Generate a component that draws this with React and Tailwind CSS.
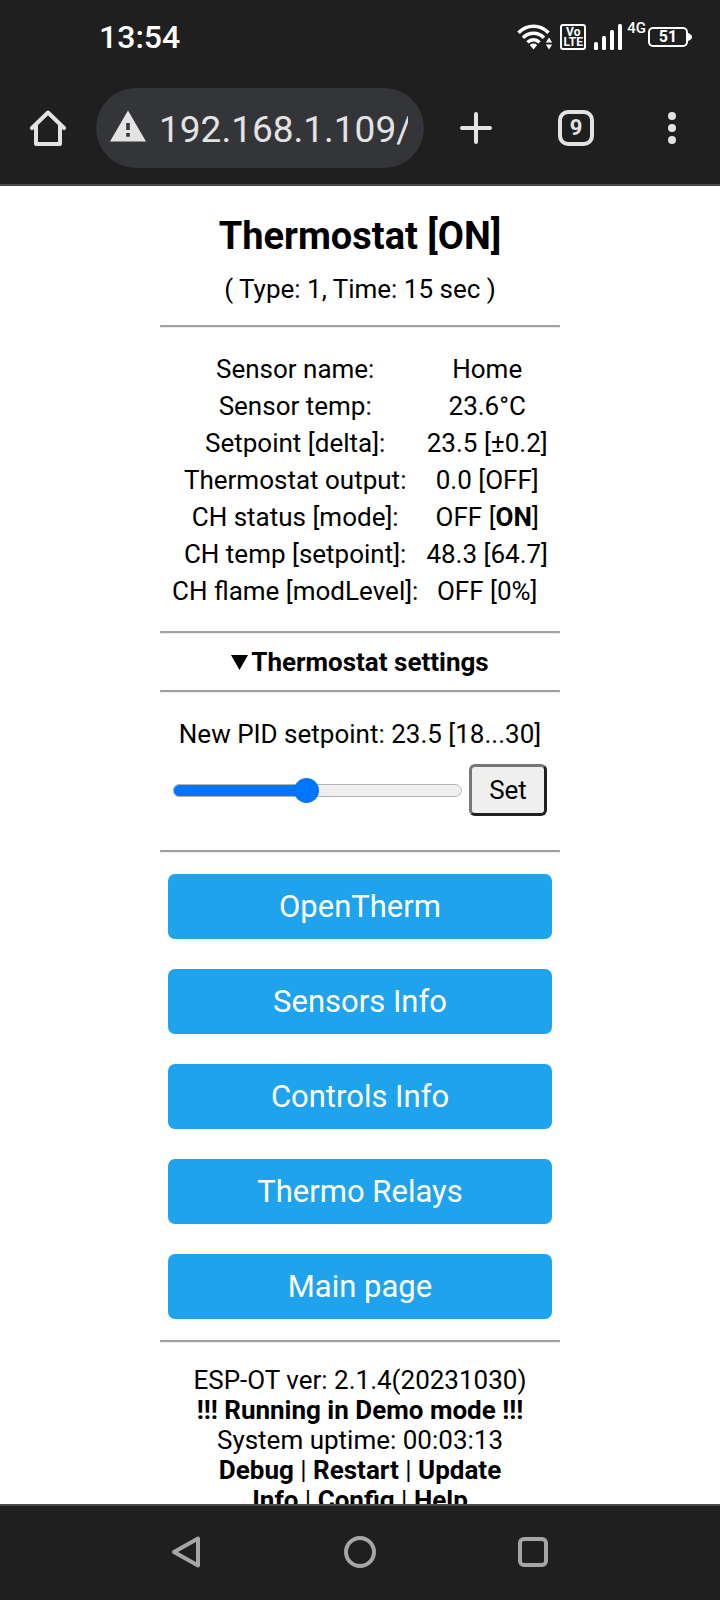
import { useState } from "react";

const readings = [
  ["Sensor name:", "Home"],
  ["Sensor temp:", "23.6°C"],
  ["Setpoint [delta]:", "23.5 [±0.2]"],
  ["Thermostat output:", "0.0 [OFF]"],
  ["CH status [mode]:", <>OFF [<b>ON</b>]</>],
  ["CH temp [setpoint]:", "48.3 [64.7]"],
  ["CH flame [modLevel]:", "OFF [0%]"],
];

const pages = ["OpenTherm", "Sensors Info", "Controls Info", "Thermo Relays", "Main page"];

function Rule() {
  return <hr className="h-[3px] w-full border-x border-t-2 border-b border-x-[#bbbbbb] border-t-[#a0a0a0] border-b-[#ececec]" />;
}

function StatusBar() {
  return (
    <div className="flex h-[73px] items-center justify-between pr-7 pl-[99px] text-white">
      <time className="text-[32px] leading-10 font-medium">13:54</time>
      <div className="flex items-center">
        <svg className="h-[26px] w-[36px]" viewBox="0 0 36 26" fill="none" aria-label="Wi-Fi">
          <g stroke="#fff" strokeWidth="3.5">
            <path d="M1.500 8.800C10 .2 23 .2 31.500 8.800" />
            <path d="M6 13.800C12 7.800 21 7.800 27 13.800" />
            <path d="M10.500 18.400C14 14.800 19 14.800 22.500 18.400" />
          </g>
          <path d="M12.800 21Q16.500 18.200 20.200 21L16.500 25.500Z" fill="#fff" />
          <path d="M32 13.500l3.200 5h-6.400zM32 25.500l3.200-5h-6.400z" fill="#fff" />
        </svg>
        <div className="ml-[7px] flex h-[26px] w-[26px] flex-col items-center justify-center rounded-[3px] border-2 border-white text-xs leading-[10px] font-bold">
          <span>Vo</span>
          <span>LTE</span>
        </div>
        <svg className="ml-2 h-[26px] w-[28px]" viewBox="0 0 28 26" aria-label="Signal">
          <g fill="#fff">
            <rect x="0" y="18" width="4" height="8" rx="1.500" />
            <rect x="8" y="12" width="4" height="14" rx="1.500" />
            <rect x="16" y="6" width="4" height="20" rx="1.500" />
            <rect x="24" y="0" width="4" height="26" rx="1.500" />
          </g>
        </svg>
        <span className="ml-[5px] self-start pr-[2px] text-[15px] leading-2 font-medium">4G</span>
        <div className="flex h-5 w-10 items-center justify-center rounded-[5px] border-2 border-white text-base leading-4 font-bold">51</div>
        <svg className="h-2 w-1" viewBox="0 0 4 8" aria-hidden="true">
          <path d="M0 0Q4 1.500 4 4T0 8Z" fill="#fff" />
        </svg>
      </div>
    </div>
  );
}

function Toolbar() {
  return (
    <div className="flex h-[111px] items-center px-[30px] pb-px text-[#e3e3e3]">
      <button type="button" aria-label="Home" className="shrink-0">
        <svg className="size-9" viewBox="0 0 36 36" fill="none" stroke="currentColor" strokeWidth="4" strokeLinecap="round" strokeLinejoin="round">
          <path d="M2 18L18 2.500L34 18" />
          <path d="M6 15V34H30V15" />
        </svg>
      </button>
      <label className="ml-[30px] flex h-20 min-w-0 flex-1 items-center gap-[13px] rounded-full bg-[#343539] pr-4 pl-[14px]">
        <svg className="mb-1 h-8 w-9 shrink-0" viewBox="0 0 36 32" aria-label="Not secure">
          <path fillRule="evenodd" fill="#e3e3e3" d="M18 0.500L36 31.500H0ZM16.200 13V20H19.800V13ZM16.200 23V26.800H19.800V23Z" />
        </svg>
        <input aria-label="Address" defaultValue="192.168.1.109/" className="min-w-0 flex-1 bg-transparent pt-1 text-[37px] leading-10 outline-none" />
      </label>
      <button type="button" aria-label="New tab" className="ml-9 shrink-0">
        <svg className="size-8" viewBox="0 0 32 32" stroke="currentColor" strokeWidth="4" strokeLinecap="round">
          <path d="M2 16H30M16 2V30" />
        </svg>
      </button>
      <button type="button" aria-label="Tabs" className="ml-[66px] flex size-9 shrink-0 items-center justify-center rounded-[10px] border-4 border-[#e3e3e3] text-[22px] leading-6 font-bold">9</button>
      <button type="button" aria-label="Menu" className="ml-[60px] shrink-0">
        <svg className="h-8 w-9" viewBox="0 0 36 32" fill="currentColor">
          <circle cx="18" cy="4" r="4" />
          <circle cx="18" cy="16" r="4" />
          <circle cx="18" cy="28" r="4" />
        </svg>
      </button>
    </div>
  );
}

function SetpointForm() {
  const [value, setValue] = useState(23.5);
  const percent = ((value - 18) / 12) * 100;
  return (
    <form onSubmit={(e) => e.preventDefault()} className="mt-[26px] mb-[34px] px-[13px]">
      <label htmlFor="setpoint" className="block">New PID setpoint: {value.toFixed(1)} [18...30]</label>
      <div className="mt-[15px] flex items-center gap-[7px]">
        <input
          id="setpoint"
          type="range"
          min="18"
          max="30"
          step="0.1"
          value={value}
          onChange={(e) => setValue(Number(e.target.value))}
          style={{ backgroundImage: `linear-gradient(to right, #0075ff ${percent}%, transparent ${percent}%)` }}
          className="h-[13px] min-w-0 flex-1 appearance-none rounded-full bg-[#efefef] ring-1 ring-[#b2b2b2] ring-inset [&::-webkit-slider-thumb]:size-[25px] [&::-webkit-slider-thumb]:appearance-none [&::-webkit-slider-thumb]:rounded-full [&::-webkit-slider-thumb]:bg-[#0075ff]"
        />
        <button type="submit" className="h-[52px] w-[78px] rounded-md border-3 border-t-[#767676] border-r-[#212121] border-b-[#212121] border-l-[#767676] bg-[#efefef]">Set</button>
      </div>
    </form>
  );
}

export default function App() {
  return (
    <div className="flex h-screen flex-col bg-white font-[Roboto,sans-serif] text-black">
      <header className="shrink-0 border-b-2 border-[#4a4a4a] bg-[#1f1f1f]">
        <StatusBar />
        <Toolbar />
      </header>

      <main className="min-h-0 flex-1 overflow-hidden">
        <div className="mx-auto w-full max-w-[400px] text-center text-[26px] leading-[30px]">
          <h1 className="pt-7 text-[38px] leading-[44px] font-bold">Thermostat [ON]</h1>
          <p className="mt-4 mb-[21px]">( Type: 1, Time: 15 sec )</p>
          <Rule />
          <table className="mx-auto my-[22px]">
            <tbody>
              {readings.map(([name, value]) => (
                <tr key={name} className="h-[37px]">
                  <th scope="row" className="pr-2 font-normal">{name}</th>
                  <td>{value}</td>
                </tr>
              ))}
            </tbody>
          </table>
          <Rule />
          <details open>
            <summary className="flex items-center justify-center gap-[3px] py-[13px] font-bold">
              <svg className="h-[15px] w-[17px]" viewBox="0 0 17 15" aria-hidden="true">
                <path d="M0 0H17L8.500 15Z" />
              </svg>
              Thermostat settings
            </summary>
            <Rule />
            <SetpointForm />
          </details>
          <Rule />
          <nav className="my-[21px] flex flex-col gap-[30px] px-2">
            {pages.map((page) => (
              <a key={page} href="#" className="flex h-[65px] items-center justify-center rounded-[7px] bg-[#1fa3ec] text-[31px] text-white">{page}</a>
            ))}
          </nav>
          <Rule />
          <footer className="pt-[22px]">
            <p>ESP-OT ver: 2.1.4(20231030)</p>
            <p className="font-bold">!!! Running in Demo mode !!!</p>
            <p>System uptime: 00:03:13</p>
            <p><a href="#" className="font-bold">Debug</a> | <a href="#" className="font-bold">Restart</a> | <a href="#" className="font-bold">Update</a></p>
            <p><a href="#" className="font-bold">Info</a> | <a href="#" className="font-bold">Config</a> | <a href="#" className="font-bold">Help</a></p>
          </footer>
        </div>
      </main>

      <nav aria-label="System" className="grid h-24 shrink-0 grid-cols-3 place-items-center border-t-2 border-[#4a4a4a] bg-[#1f1f1f] px-[100px] pb-[2px] text-[#a6a6a6]">
        <button type="button" aria-label="Back">
          <svg className="size-8" viewBox="0 0 32 32" fill="none" stroke="currentColor" strokeWidth="4" strokeLinejoin="round">
            <path d="M3 16L27 2.500V29.500Z" />
          </svg>
        </button>
        <button type="button" aria-label="Home screen">
          <svg className="size-8" viewBox="0 0 32 32" fill="none" stroke="currentColor" strokeWidth="4">
            <circle cx="16" cy="16" r="14" />
          </svg>
        </button>
        <button type="button" aria-label="Recent apps">
          <svg className="size-8" viewBox="0 0 32 32" fill="none" stroke="currentColor" strokeWidth="4">
            <rect x="3" y="3" width="26" height="26" rx="4" />
          </svg>
        </button>
      </nav>
    </div>
  );
}
